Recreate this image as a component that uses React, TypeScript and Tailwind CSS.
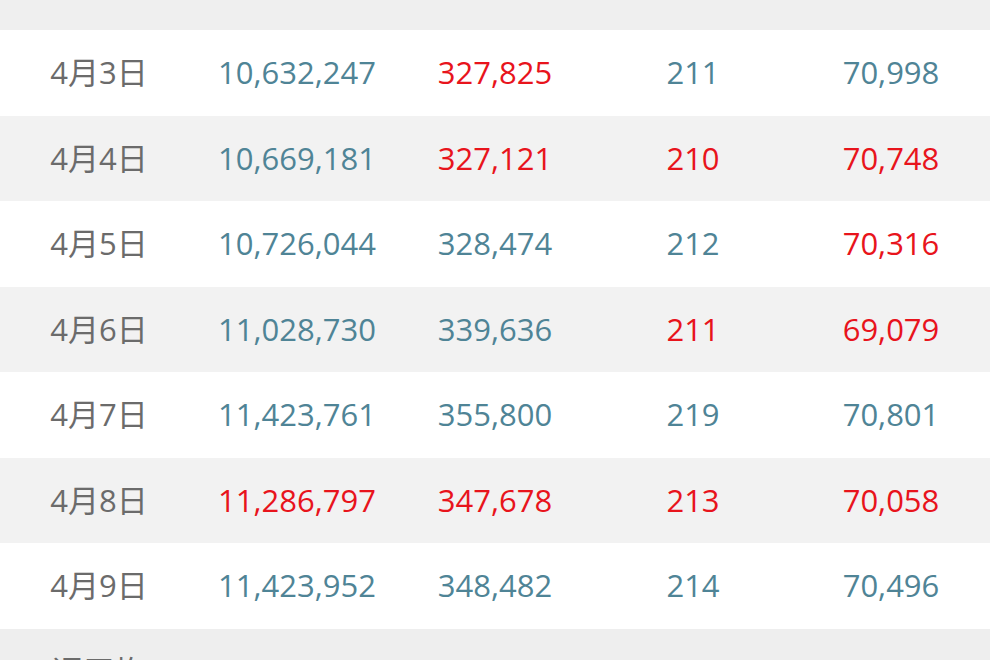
const T = "text-[#4f8496]";
const R = "text-[#e8141c]";

type Cell = { v: string; red?: boolean };

const rows: { day: string; cells: Cell[] }[] = [
  { day: "4月3日", cells: [{ v: "10,632,247" }, { v: "327,825", red: true }, { v: "211" }, { v: "70,998" }] },
  { day: "4月4日", cells: [{ v: "10,669,181" }, { v: "327,121", red: true }, { v: "210", red: true }, { v: "70,748", red: true }] },
  { day: "4月5日", cells: [{ v: "10,726,044" }, { v: "328,474" }, { v: "212" }, { v: "70,316", red: true }] },
  { day: "4月6日", cells: [{ v: "11,028,730" }, { v: "339,636" }, { v: "211", red: true }, { v: "69,079", red: true }] },
  { day: "4月7日", cells: [{ v: "11,423,761" }, { v: "355,800" }, { v: "219" }, { v: "70,801" }] },
  { day: "4月8日", cells: [{ v: "11,286,797", red: true }, { v: "347,678", red: true }, { v: "213", red: true }, { v: "70,058", red: true }] },
  { day: "4月9日", cells: [{ v: "11,423,952" }, { v: "348,482" }, { v: "214" }, { v: "70,496" }] },
];

function Row({ day, cells, bg }: { day: string; cells: Cell[]; bg: string }) {
  return (
    <div className={`grid grid-cols-5 h-[85.5px] items-center text-center ${bg}`}>
      <div className="text-[#6b6b6b]">{day}</div>
      {cells.map((c, i) => (
        <div key={i} className={c.red ? R : T}>
          {c.v}
        </div>
      ))}
    </div>
  );
}

export default function App() {
  return (
    <div
      className="w-[990px] h-[660px] overflow-hidden bg-white text-[31px] leading-none"
      style={{ fontFamily: '"Open Sans", "Noto Sans CJK JP", sans-serif' }}
    >
      <div className="mt-[-55.5px]">
        {/* header row, mostly scrolled off */}
        <div className="grid grid-cols-5 h-[85.5px] items-center text-center bg-[#efefef] text-[#999999] pb-[7px]">
          <div>日付</div>
          <div>人/日</div>
          <div>人/日</div>
          <div>人/日</div>
          <div>人/日</div>
        </div>
        {rows.map((r, i) => (
          <Row key={r.day} day={r.day} cells={r.cells} bg={i % 2 === 0 ? "bg-white" : "bg-[#f2f2f2]"} />
        ))}
        {/* summary row, mostly below the fold */}
        <div className="grid grid-cols-5 h-[85.5px] items-center text-center bg-[#eeeeee]">
          <div className="text-[#6b6b6b]">週平均</div>
          <div className={T}>11,027,245</div>
          <div className={T}>339,288</div>
          <div className={T}>213</div>
          <div className={R}>70,357</div>
        </div>
      </div>
    </div>
  );
}
